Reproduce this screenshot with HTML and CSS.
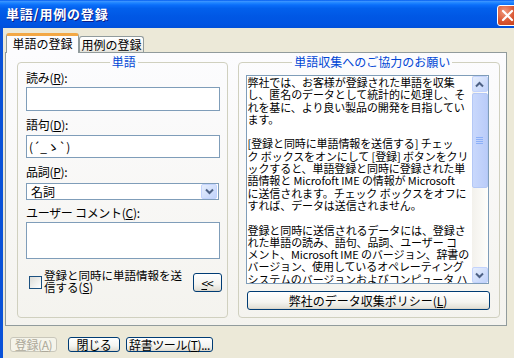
FILE: index.html
```
<!DOCTYPE html>
<html>
	<head>
		<meta charset="UTF-8"/>
		<title>単語/用例の登録</title>
		<link rel="stylesheet" href="styles.css">
	</head>
	<body>
		<div class="window">
			<div class="titlebar">
				<span class="title">単語/用例の登録</span>
				<span class="close">
					<svg width="21" height="21" viewBox="0 0 21 21"><path d="M6 6 L15 15 M15 6 L6 15" stroke="#fff" stroke-width="2.2" stroke-linecap="round"/></svg>
				</span>
			</div>
			<div class="client">
				<div class="tabs">
					<span class="tab active">単語の登録</span>
					<span class="tab">用例の登録</span>
				</div>
				<div class="panel">
					<fieldset class="group word">
						<legend>単語</legend>
						<label class="lbl l1">読み(<u>R</u>):</label>
						<input class="edit e1" type="text" value="">
						<label class="lbl l2">語句(<u>D</u>):</label>
						<input class="edit e2" type="text" value="(´_ゝ`)">
						<label class="lbl l3">品詞(<u>P</u>):</label>
						<div class="combo">
							<span class="combo-text">名詞</span>
							<span class="sbtn drop">
								<svg width="9" height="7" viewBox="0 0 9 7"><path d="M1 1.5 L4.5 5 L8 1.5" fill="none" stroke="#4D6185" stroke-width="2"/></svg>
							</span>
						</div>
						<label class="lbl l4">ユーザー コメント(<u>C</u>):</label>
						<textarea class="edit memo-edit"></textarea>
						<div class="check-row">
							<span class="checkbox"></span>
							<span class="check-label">登録と同時に単語情報を送<br>信する(<u>S</u>)</span>
							<button class="btn small"><u>&lt;</u>&lt;</button>
						</div>
					</fieldset>
					<fieldset class="group notice">
						<legend>単語収集へのご協力のお願い</legend>
						<div class="memo">
							<div class="memo-text">
								<div>弊社では、お客様が登録された単語を収集</div>
								<div>し、匿名のデータとして統計的に処理し、そ</div>
								<div>れを基に、より良い製品の開発を目指してい</div>
								<div>ます。</div>
								<div>&nbsp;</div>
								<div>[登録と同時に単語情報を送信する] チェッ</div>
								<div>ク ボックスをオンにして [登録] ボタンをクリ</div>
								<div>ックすると、単語登録と同時に登録された単</div>
								<div>語情報と Microfoft IME の情報が Microsoft</div>
								<div>に送信されます。チェック ボックスをオフに</div>
								<div>すれば、データは送信されません。</div>
								<div>&nbsp;</div>
								<div>登録と同時に送信されるデータには、登録さ</div>
								<div>れた単語の読み、語句、品詞、ユーザー コ</div>
								<div>メント、Microsoft IME のバージョン、辞書の</div>
								<div>バージョン、使用しているオペレーティング</div>
								<div>システムのバージョンおよびコンピュータ ハ</div>
							</div>
							<div class="vscroll">
								<span class="sbtn">
									<svg width="9" height="7" viewBox="0 0 9 7"><path d="M1 5.5 L4.5 2 L8 5.5" fill="none" stroke="#4D6185" stroke-width="2"/></svg>
								</span>
								<div class="track">
									<span class="thumb"><i></i><i></i><i></i><i></i></span>
								</div>
								<span class="sbtn">
									<svg width="9" height="7" viewBox="0 0 9 7"><path d="M1 1.5 L4.5 5 L8 1.5" fill="none" stroke="#4D6185" stroke-width="2"/></svg>
								</span>
							</div>
						</div>
						<button class="btn policy">弊社のデータ収集ポリシー(<u>L</u>)</button>
					</fieldset>
				</div>
				<div class="actions">
					<button class="btn b-reg" disabled>登録(<u>A</u>)</button>
					<button class="btn b-close">閉じる</button>
					<button class="btn b-tool">辞書ツール(<u>T</u>)...</button>
				</div>
			</div>
		</div>
	</body>
</html>
```

FILE: styles.css
```
* {
	box-sizing: border-box;
}
body {
	margin: 0;
	width: 514px;
	height: 358px;
	overflow: hidden;
	background: #ECE9D8;
	font: 12px "Noto Sans CJK JP", "Noto Sans", sans-serif;
	color: #000;
}
u {
	text-decoration: underline;
	text-underline-offset: 1px;
}
.window {
	display: flex;
	flex-direction: column;
	width: 514px;
	height: 358px;
	overflow: hidden;
}
.titlebar {
	display: flex;
	align-items: center;
	justify-content: space-between;
	height: 28px;
	flex: none;
	padding-left: 6px;
	background: linear-gradient(#0058EE 0%, #3A93FF 5%, #1F86FF 10%, #0A6EFA 18%, #0260EC 30%, #0057E4 60%, #0054E3 85%, #0050DA 100%);
}
.title {
	color: #fff;
	font-weight: bold;
	font-size: 13px;
	line-height: 16px;
	letter-spacing: 0.8px;
	text-shadow: 1px 1px #0A1E8A;
}
.close {
	display: flex;
	width: 21px;
	height: 21px;
	margin-right: -4px;
	margin-top: 2px;
	border: 1px solid #fff;
	border-radius: 3px;
	background: radial-gradient(circle at 35% 30%, #F09A7E, #D9542F 55%, #C0401C);
}
.close svg {
	margin: -1px;
}
.client {
	flex: 1;
	border-left: 3px solid #0A52D8;
	padding: 5px 0 0 2px;
	background: #ECE9D8;
}
.tabs {
	display: flex;
	align-items: flex-end;
	height: 19px;
	padding-left: 1px;
}
.tab {
	width: 65px;
	height: 16px;
	border: 1px solid #919B9C;
	border-bottom: none;
	border-radius: 3px 3px 0 0;
	background: linear-gradient(#FFFFFF, #F3F3EF 70%, #E4E2DA);
	text-align: center;
	line-height: 15px;
}
.tab.active {
	position: relative;
	z-index: 1;
	width: 73px;
	height: 20px;
	margin-bottom: -1px;
	border-top: 3px solid #F3A845;
	background: #FCFCFE;
	line-height: 16px;
}
.panel {
	display: flex;
	gap: 10px;
	width: 502px;
	height: 274px;
	padding: 2px 6px 0 11px;
	border: 1px solid #919B9C;
	background: linear-gradient(#FCFCFE, #F4F3EE);
}
.group {
	margin: 0;
	height: 263px;
	border: 1px solid #D0D0BF;
	border-radius: 4px;
}
.group legend {
	margin: 0 auto;
	padding: 0 2px;
	color: #0046D5;
	line-height: 14px;
}
.word {
	width: 211px;
	padding: 0 5px 0 8px;
}
.notice {
	width: 263px;
	padding: 0 0 0 7px;
}
.lbl {
	display: block;
	height: 14px;
	line-height: 14px;
	letter-spacing: -0.3px;
}
.l1 { margin-top: 2px; }
.l2, .l3 { margin-top: 7px; }
.l4 { margin-top: 6px; }
.edit {
	display: block;
	width: 194px;
	margin: 0;
	padding: 0 2px;
	border: 1px solid #7F9DB9;
	background: #fff;
	font: 12px "Noto Sans CJK JP", sans-serif;
	outline: none;
}
.e1 {
	height: 24px;
	margin-top: 2px;
}
.e2 {
	height: 23px;
	margin-top: 3px;
}
.combo {
	display: flex;
	align-items: center;
	justify-content: space-between;
	width: 193px;
	height: 17px;
	margin-top: 4px;
	padding: 0 1px 0 4px;
	border: 1px solid #7F9DB9;
	background: #fff;
	line-height: 15px;
}
.memo-edit {
	height: 37px;
	margin-top: 2px;
	resize: none;
}
.check-row {
	display: flex;
	align-items: flex-start;
	margin-top: 11px;
	height: 23px;
}
.checkbox {
	flex: none;
	width: 13px;
	height: 13px;
	margin: 6px 0 0 3px;
	border: 1px solid #1C5180;
	background: linear-gradient(135deg, #DCDCD7, #FFFFFF);
}
.check-label {
	margin: -1px 0 0 2px;
	font-size: 11.5px;
	line-height: 12px;
	letter-spacing: 0;
	white-space: nowrap;
}
.btn {
	margin: 0;
	padding: 0;
	border: 1px solid #003C74;
	border-radius: 3px;
	background: linear-gradient(#FFFFFF, #F4F4F0 60%, #E3E1D8 92%, #D6D0C5);
	font: 12px "Noto Sans CJK JP", sans-serif;
	color: #000;
	line-height: 12px;
	white-space: nowrap;
}
.btn.small {
	flex: none;
	width: 29px;
	height: 19px;
	margin: 3px 0 0 auto;
	letter-spacing: -1px;
}
.memo {
	display: flex;
	width: 243px;
	height: 209px;
	margin-top: 6px;
	border: 1px solid #7F9DB9;
	background: #fff;
}
.memo-text {
	flex: 1;
	overflow: hidden;
	padding: 0 0 0 1px;
	font-size: 11px;
	line-height: 12.3px;
	letter-spacing: -0.1px;
	white-space: nowrap;
}
.vscroll {
	display: flex;
	flex-direction: column;
	width: 16px;
	flex: none;
	background: linear-gradient(90deg, #F3F1EC, #FEFEFB);
}
.sbtn {
	display: flex;
	align-items: center;
	justify-content: center;
	width: 16px;
	height: 16px;
	flex: none;
	border: 1px solid #C3D3FD;
	border-radius: 2px;
	background: linear-gradient(135deg, #E6EEFC, #C1D3FB);
}
.combo .sbtn {
	width: 16px;
	height: 15px;
}
.track {
	flex: 1;
}
.thumb {
	display: flex;
	flex-direction: column;
	align-items: center;
	justify-content: center;
	gap: 1px;
	height: 95px;
	margin-top: 1px;
	border: 1px solid #B4C8F6;
	border-radius: 2px;
	background: linear-gradient(90deg, #C9D8FC, #BACCF9);
}
.thumb i {
	display: block;
	width: 7px;
	height: 1px;
	background: #EEF4FE;
	border-bottom: 1px solid #8CB0F8;
}
.btn.policy {
	display: block;
	width: 243px;
	height: 19px;
	margin: 7px 0 0 1px;
}
.actions {
	display: flex;
	gap: 6px;
	margin-top: 11px;
	padding-left: 5px;
}
.actions .btn {
	height: 15px;
	letter-spacing: -0.4px;
}
.b-reg {
	width: 47px;
	margin-right: 5px;
}
.btn:disabled {
	color: #ACA899;
	border-color: #C9C7BA;
	background: #F5F4EA;
}
.b-close {
	width: 52px;
}
.b-tool {
	width: 87px;
}
```
